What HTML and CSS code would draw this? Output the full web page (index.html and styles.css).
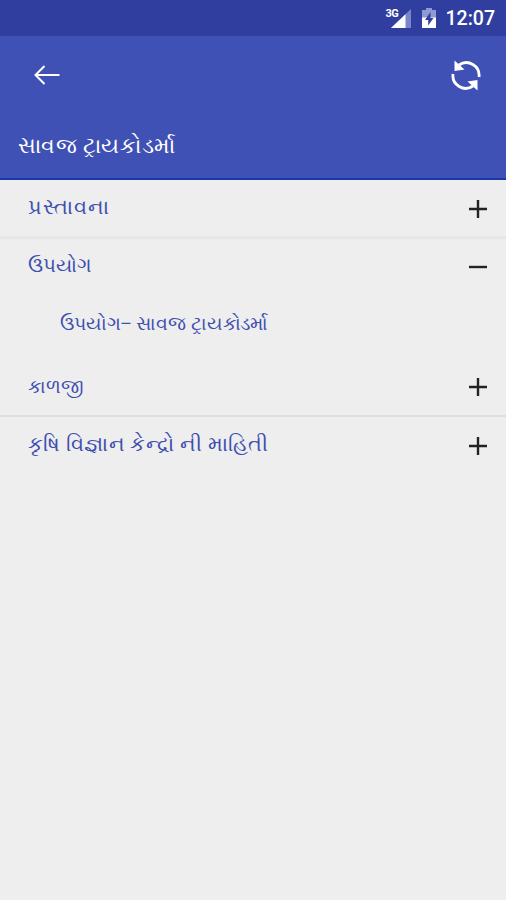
FILE: index.html
```html
<!DOCTYPE html>
<html lang="gu">
<head>
<meta charset="utf-8">
<title>સાવજ ટ્રાયકોડર્મા</title>
<link rel="stylesheet" href="styles.css">
</head>
<body>
<div class="status">
  <div class="network">
    <span class="network-type">3G</span>
    <svg width="20" height="19" viewBox="0 0 20 19"><path d="M20 0v19H0z" fill="#7b86c8"/><path d="M14.5 5.2V19H0z" fill="#fff"/></svg>
  </div>
  <svg class="battery" width="14" height="20" viewBox="0 0 14 20"><path d="M4 0h6v2h4v8H0V2h4z" fill="#8f99d2"/><path d="M0 9.500h14V20H0z" fill="#fff"/><path d="M8.500 4 3 12h3.200v5.500L11.500 10H8.500z" fill="#303f9f"/></svg>
  <span class="clock">12:07</span>
</div>
<header class="bar">
  <div class="tools">
    <svg width="28" height="22" viewBox="0 0 28 22" fill="none" stroke="#fff" stroke-width="2"><path d="M12.500 2 3.500 11l9 9M3 11h24.500"/></svg>
    <svg width="32" height="32" viewBox="0 0 32 32"><path d="M9 6A12.800 12.800 0 0 1 29 18M23 27A12.800 12.800 0 0 1 3 15" fill="none" stroke="#fff" stroke-width="2.800"/><path d="M4.500 1.500V12l10-1.500zM27.500 31.500V21l-10 1.500z" fill="#fff"/></svg>
  </div>
  <h1 class="title">સાવજ ટ્રાયકોડર્મા</h1>
</header>
<main>
  <div class="row intro"><span>પ્રસ્તાવના</span><svg width="18" height="18" viewBox="0 0 18 18"><path d="M0 9h18M9 0v18"/></svg></div>
  <div class="row usage"><span>ઉપયોગ</span><svg width="18" height="18" viewBox="0 0 18 18"><path d="M0 9h18"/></svg></div>
  <div class="row child"><span>ઉપયોગ− સાવજ ટ્રાયકોડર્મા</span></div>
  <div class="row care"><span>કાળજી</span><svg width="18" height="18" viewBox="0 0 18 18"><path d="M0 9h18M9 0v18"/></svg></div>
  <div class="row centres"><span>કૃષિ વિજ્ઞાન કેન્દ્રો ની માહિતી</span><svg width="18" height="18" viewBox="0 0 18 18"><path d="M0 9h18M9 0v18"/></svg></div>
</main>
</body>
</html>
```
FILE: styles.css
```css
*{box-sizing:border-box}
body{margin:0;height:900px;background:#eee;font-family:"Noto Sans",Roboto,sans-serif;color:#3f4fae}
svg{display:block;flex:none}
.status{height:36px;padding-right:11px;background:#303f9f;display:flex;justify-content:flex-end;align-items:center;color:#fff}
.network{display:flex;margin-right:11px}
.network-type{width:13px;margin:-2px -8px 0 0;font:700 11px/13px Roboto,sans-serif;letter-spacing:-.5px}
.battery{margin-right:10px}
.clock{font:500 19.500px/38px Roboto,sans-serif;padding-top:2px}
.bar{height:144px;padding:0 24px 0 32px;background:#3f51b5;border-bottom:2px solid #1c35ab;color:#fff}
.tools{display:flex;justify-content:space-between;align-items:center;height:78px}
.bar .title{margin:12px 0 0 -14px;font-size:22px;line-height:36px;font-weight:400;letter-spacing:.3px}
.row{height:58px;padding:0 19px 0 28px;display:flex;align-items:center;justify-content:space-between;font-size:20px;white-space:nowrap}
.row span{padding-bottom:5px}
.row path{stroke:#222;stroke-width:2.4}
.intro{height:59px;padding-top:1px;border-bottom:3px solid #e7e7e7;font-size:21px;letter-spacing:1px}
.usage{height:56px}
.child{height:61px;padding-left:60px;font-size:19px;letter-spacing:-.1px}
.care{height:61px;padding-top:2px;border-bottom:2px solid #dfdfdf;font-size:19px}
.care span{padding-bottom:2px}
.centres{font-size:20.500px;letter-spacing:.25px}
.centres span{padding-bottom:6px}
```
